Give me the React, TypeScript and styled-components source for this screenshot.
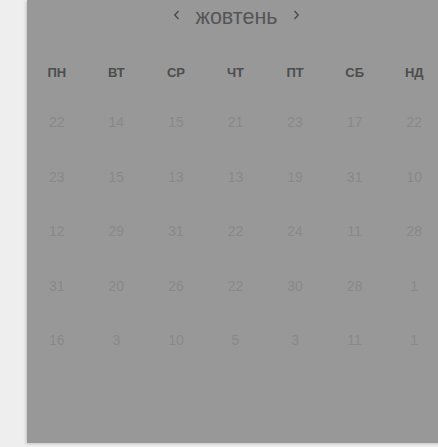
import React from "react";
import styled, { createGlobalStyle } from "styled-components";

const Global = createGlobalStyle`
  html, body { margin: 0; padding: 0; background: #eeeeee; }
  body { font-family: "Liberation Sans", Arial, sans-serif; }
`;

const Page = styled.div`
  width: 438px;
  height: 447px;
  display: flex;
  padding-left: 27px;
  box-sizing: border-box;
  overflow: hidden;
`;

const Panel = styled.div`
  flex: 0 0 417px;
  height: 443px;
  background: #989898;
  box-shadow: -1px 1px 3px rgba(0, 0, 0, 0.18);
  display: flex;
  flex-direction: column;
`;

const Header = styled.div`
  height: 34px;
  display: flex;
  align-items: center;
  justify-content: center;
  gap: 16px;
  padding-left: 2px;
`;

const NavButton = styled.button`
  border: 0;
  background: none;
  padding: 0;
  margin-top: -4px;
  display: flex;
  align-items: center;
  color: #4a4a4a;
  cursor: pointer;
`;

const Month = styled.span`
  font-size: 21.5px;
  color: #555555;
`;

const Weekdays = styled.div`
  display: grid;
  grid-template-columns: repeat(7, 1fr);
  margin-top: 28px;
  height: 20px;
  align-items: center;
`;

const Weekday = styled.div`
  text-align: center;
  font-size: 13px;
  font-weight: bold;
  color: #4d4d4d;
`;

const Days = styled.div`
  display: grid;
  grid-template-columns: repeat(7, 1fr);
  grid-auto-rows: 54.5px;
  margin-top: 13px;
  align-items: center;
`;

const Day = styled.div`
  text-align: center;
  font-size: 14px;
  color: #888888;
`;

const Chevron = ({ dir }: { dir: "l" | "r" }) => (
  <svg width="7" height="10" viewBox="0 0 7 10" fill="none">
    <path
      d={dir === "l" ? "M5.5 1 L1.8 5 L5.5 9" : "M1.5 1 L5.2 5 L1.5 9"}
      stroke="currentColor"
      strokeWidth="1.4"
    />
  </svg>
);

const weekdays = ["ПН", "ВТ", "СР", "ЧТ", "ПТ", "СБ", "НД"];
const days = [
  [22, 14, 15, 21, 23, 17, 22],
  [23, 15, 13, 13, 19, 31, 10],
  [12, 29, 31, 22, 24, 11, 28],
  [31, 20, 26, 22, 30, 28, 1],
  [16, 3, 10, 5, 3, 11, 1],
];

export default function App() {
  return (
    <>
      <Global />
      <Page>
        <Panel>
          <Header>
            <NavButton aria-label="prev">
              <Chevron dir="l" />
            </NavButton>
            <Month>жовтень</Month>
            <NavButton aria-label="next">
              <Chevron dir="r" />
            </NavButton>
          </Header>
          <Weekdays>
            {weekdays.map((w) => (
              <Weekday key={w}>{w}</Weekday>
            ))}
          </Weekdays>
          <Days>
            {days.flat().map((d, i) => (
              <Day key={i}>{d}</Day>
            ))}
          </Days>
        </Panel>
      </Page>
    </>
  );
}
